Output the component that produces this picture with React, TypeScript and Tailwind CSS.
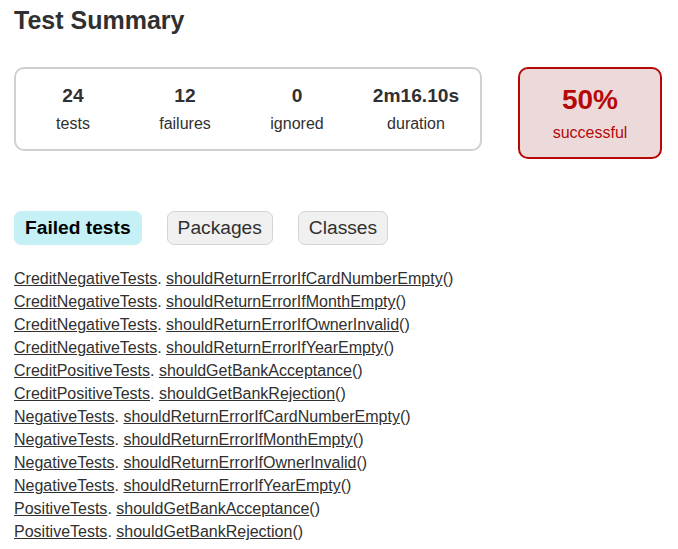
const FAILED: [string, string][] = [
  ["CreditNegativeTests", "shouldReturnErrorIfCardNumberEmpty"],
  ["CreditNegativeTests", "shouldReturnErrorIfMonthEmpty"],
  ["CreditNegativeTests", "shouldReturnErrorIfOwnerInvalid"],
  ["CreditNegativeTests", "shouldReturnErrorIfYearEmpty"],
  ["CreditPositiveTests", "shouldGetBankAcceptance"],
  ["CreditPositiveTests", "shouldGetBankRejection"],
  ["NegativeTests", "shouldReturnErrorIfCardNumberEmpty"],
  ["NegativeTests", "shouldReturnErrorIfMonthEmpty"],
  ["NegativeTests", "shouldReturnErrorIfOwnerInvalid"],
  ["NegativeTests", "shouldReturnErrorIfYearEmpty"],
  ["PositiveTests", "shouldGetBankAcceptance"],
  ["PositiveTests", "shouldGetBankRejection"],
];

const COUNTERS = [
  { value: "24", label: "tests", wide: false },
  { value: "12", label: "failures", wide: false },
  { value: "0", label: "ignored", wide: false },
  { value: "2m16.10s", label: "duration", wide: true },
];

const TABS = ["Failed tests", "Packages", "Classes"];

export default function App() {
  return (
    <div className="min-h-[549px] bg-white px-[14px] pt-[6px] font-['Liberation_Sans',Arial,sans-serif] text-[16px] text-[#303030]">
      <h1 className="text-[25px] font-bold leading-[1.15]">Test Summary</h1>

      {/* summary */}
      <div className="mt-[32px] flex items-start">
        <div className="flex rounded-[10px] border-2 border-[#d0d0d0] p-px">
          {COUNTERS.map((c) => (
            <div
              key={c.label}
              className={(c.wide ? "w-[126px]" : "w-[112px]") + " py-[15px] text-center"}
            >
              <p className="mb-[8px] text-[19.2px] font-bold leading-[1.15]">{c.value}</p>
              <p className="leading-[1.15]">{c.label}</p>
            </div>
          ))}
        </div>
        <div className="ml-[36px] w-[144px] rounded-[10px] border-2 border-[#b60808] bg-[#ecdada] py-[15px] text-center text-[#b60808]">
          <p className="mb-[8px] text-[28px] font-bold leading-[1.15]">50%</p>
          <p className="leading-[1.15]">successful</p>
        </div>
      </div>

      {/* tabs */}
      <ul className="mt-[52px] flex gap-[25px]">
        {TABS.map((t, i) => (
          <li
            key={t}
            className={
              i === 0
                ? "rounded-[7px] border border-[#c5f0f5] bg-[#c5f0f5] px-[10px] py-[5px] text-[19.2px] font-bold leading-[1.15] text-black"
                : "rounded-[7px] border border-[#d4d4d4] bg-[#f0f0f0] px-[10px] py-[5px] text-[19.2px] leading-[1.15]"
            }
          >
            {t}
          </li>
        ))}
      </ul>

      <ul className="mt-[25px]">
        {FAILED.map(([cls, method], i) => (
          <li key={i} className="mb-[5px] leading-[18px]">
            <a href="#" className="underline">
              {cls}
            </a>
            .{" "}
            <a href="#" className="underline">
              {method}
            </a>
            ()
          </li>
        ))}
      </ul>
    </div>
  );
}
